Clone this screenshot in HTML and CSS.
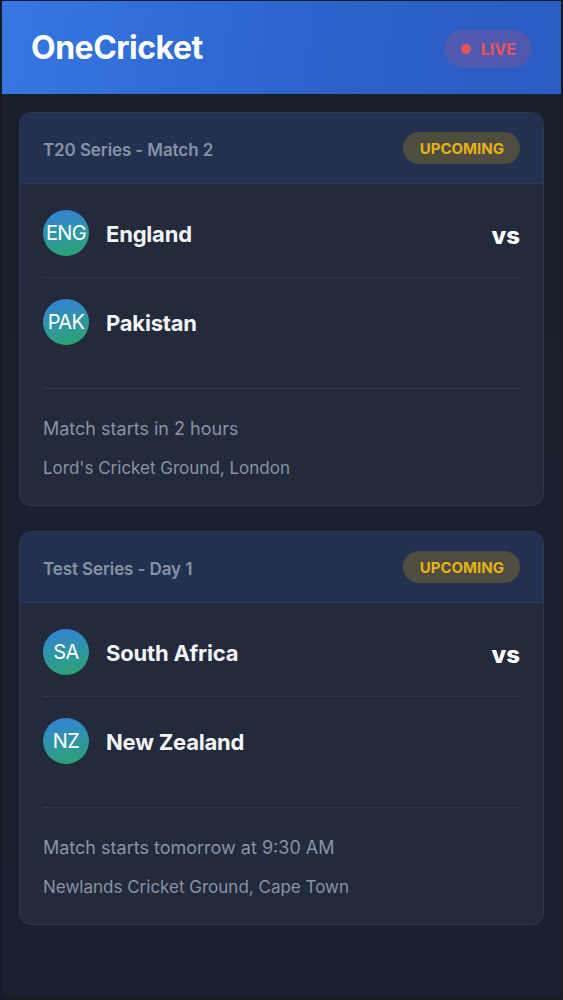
FILE: index.html
```html
<!DOCTYPE html>
<html lang="en">
<head>
<meta charset="utf-8">
<title>OneCricket</title>
<link rel="stylesheet" href="styles.css">
</head>
<body>
<div class="app">
  <header class="topbar">
    <h1 class="brand">OneCricket</h1>
    <div class="live"><span class="live-dot"></span>LIVE</div>
  </header>
  <main class="matches">
    <section class="card">
      <div class="card-head">
        <span class="series">T20 Series - Match 2</span>
        <span class="badge">UPCOMING</span>
      </div>
      <div class="teams">
        <div class="team-row">
          <span class="flag">ENG</span>
          <span class="team-name">England</span>
          <span class="vs">vs</span>
        </div>
        <div class="team-row">
          <span class="flag">PAK</span>
          <span class="team-name">Pakistan</span>
        </div>
      </div>
      <div class="info">
        <p class="status">Match starts in 2 hours</p>
        <p class="venue">Lord's Cricket Ground, London</p>
      </div>
    </section>
    <section class="card">
      <div class="card-head">
        <span class="series">Test Series - Day 1</span>
        <span class="badge">UPCOMING</span>
      </div>
      <div class="teams">
        <div class="team-row">
          <span class="flag">SA</span>
          <span class="team-name">South Africa</span>
          <span class="vs">vs</span>
        </div>
        <div class="team-row">
          <span class="flag">NZ</span>
          <span class="team-name">New Zealand</span>
        </div>
      </div>
      <div class="info">
        <p class="status">Match starts tomorrow at 9:30 AM</p>
        <p class="venue">Newlands Cricket Ground, Cape Town</p>
      </div>
    </section>
  </main>
</div>
</body>
</html>
```
FILE: styles.css
```css
* { box-sizing: border-box; }
html, body { margin: 0; padding: 0; }
body {
  background: #151a24;
  font-family: Inter, "Liberation Sans", sans-serif;
  color: #fff;
}
.app {
  min-height: 1000px;
  border: 2px solid #161b25;
  border-top-width: 1px;
  border-bottom-width: 4px;
  background: linear-gradient(180deg, #1a1f2b 0%, #1b2030 100%);
}
.topbar {
  height: 93px;
  background: linear-gradient(100deg, #3677e3 0%, #2c63cc 55%, #2a5cc2 100%);
  display: flex;
  align-items: center;
  justify-content: space-between;
  padding: 0 29px 0 29px;
}
.brand {
  margin: 0;
  font-size: 32px;
  font-weight: 700;
  letter-spacing: -0.5px;
  color: #fff;
}
.live {
  display: flex;
  align-items: center;
  gap: 10px;
  height: 38px;
  padding: 0 16px 0 17px;
  border-radius: 19px;
  background: rgba(232, 72, 90, 0.2);
  color: #e8555a;
  font-weight: 700;
  font-size: 16px;
  margin-top: 2px;
}
.live-dot {
  width: 10px;
  height: 10px;
  border-radius: 50%;
  background: #ec5454;
}
.matches {
  padding: 18px 17px 0 17px;
  display: flex;
  flex-direction: column;
  gap: 25px;
}
.card {
  background: #222a3b;
  border: 1px solid #2f3748;
  border-radius: 12px;
  overflow: hidden;
}
.card-head {
  height: 71px;
  background: #233150;
  border-bottom: 1px solid #2c3850;
  display: flex;
  align-items: center;
  justify-content: space-between;
  padding: 0 23px;
}
.series {
  color: #8791a5;
  font-size: 17px;
  font-weight: 600;
  letter-spacing: -0.1px;
  padding-top: 3px;
}
.badge {
  height: 32px;
  padding: 0 16px 0 17px;
  border-radius: 16px;
  background: rgba(234, 179, 8, 0.22);
  color: #e6b117;
  font-weight: 700;
  font-size: 15px;
  display: flex;
  align-items: center;
}
.teams {
  padding: 5px 23px 22px;
}
.team-row {
  display: flex;
  align-items: center;
  padding: 21px 0;
}
.team-row + .team-row {
  border-top: 1px solid #2f3748;
}
.flag {
  width: 46px;
  height: 46px;
  border-radius: 50%;
  background: linear-gradient(170deg, #3380dd 0%, #2f95a6 50%, #2aa46a 100%);
  display: flex;
  align-items: center;
  justify-content: center;
  font-size: 20px;
  font-weight: 400;
  letter-spacing: -0.6px;
  color: #fff;
  flex: none;
  white-space: nowrap;
}
.team-name {
  margin-left: 17px;
  font-size: 22px;
  font-weight: 700;
  letter-spacing: -0.2px;
  color: #f3f4f6;
  flex: 1;
  padding-top: 2px;
}
.vs {
  font-size: 24px;
  font-weight: 800;
  color: #fff;
  padding-top: 5px;
}
.info {
  margin: 0 23px;
  border-top: 1px solid #2f3748;
  padding: 28px 0 25px;
}
.info p {
  margin: 0;
  color: #8a93a4;
}
.status {
  font-size: 18px;
  line-height: 24px;
}
.venue {
  margin-top: 15px !important;
  font-size: 17px;
  line-height: 24px;
}
```
